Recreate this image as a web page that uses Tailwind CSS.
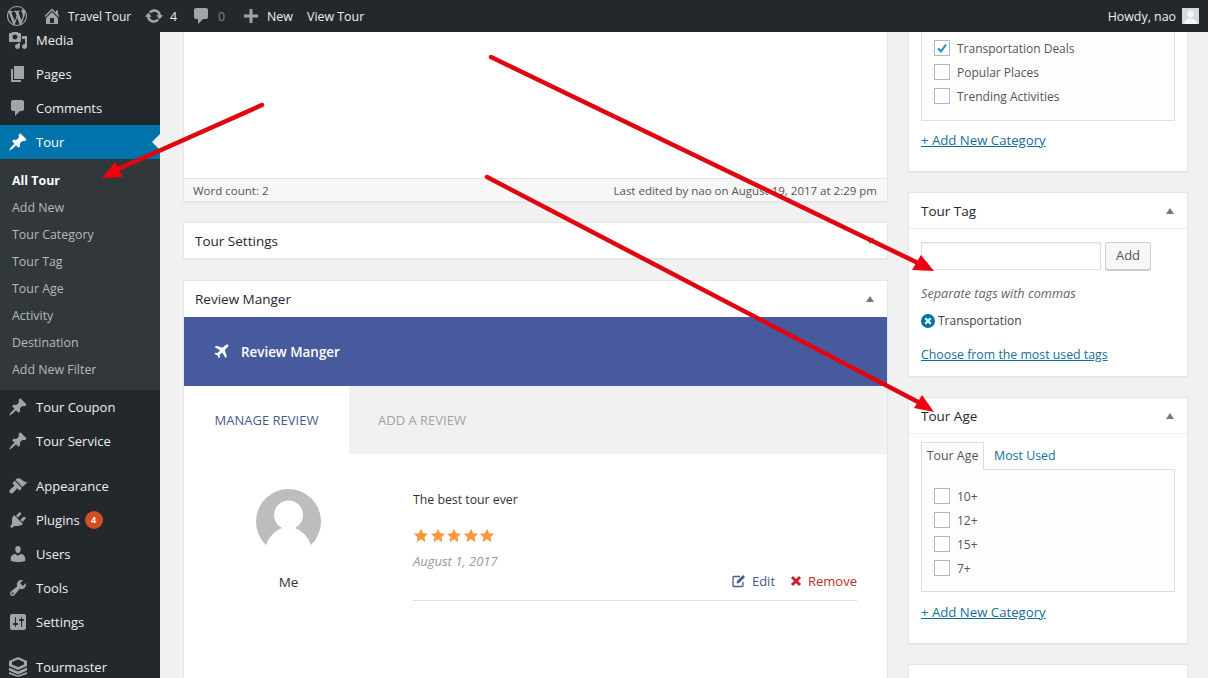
<!DOCTYPE html>
<html lang="en">
<head>
    <meta charset="UTF-8">
    <meta name="viewport" content="width=device-width, initial-scale=1.0">
    <title>Edit Tour</title>
    <script src="https://cdn.jsdelivr.net/npm/@tailwindcss/browser@4"></script>
</head>
<body class="bg-[#f1f1f1]">
<div class="relative w-[1208px] h-[678px] overflow-hidden bg-[#f1f1f1] font-['Open_Sans',sans-serif] text-[13px] text-[#444]">

    <!-- Admin bar -->
    <header class="relative z-10 h-8 bg-[#23282d] flex items-center justify-between text-[#eee] text-[12.4px]">
        <div class="flex items-center">
            <svg class="ml-[7px] w-5 h-5 fill-[#a0a5aa]" viewBox="0 0 20 20"><path d="M20 10c0-5.51-4.49-10-10-10C4.48 0 0 4.49 0 10c0 5.52 4.48 10 10 10 5.51 0 10-4.48 10-10zM7.78 15.37L4.37 6.22c.55-.02 1.17-.08 1.17-.08.5-.06.44-1.13-.06-1.11 0 0-1.45.11-2.37.11-.18 0-.37 0-.58-.01C4.12 2.69 6.87 1.11 10 1.11c2.33 0 4.45.87 6.05 2.34-.68-.11-1.65.39-1.65 1.58 0 .74.45 1.36.9 2.1.35.61.55 1.36.55 2.46 0 1.49-1.4 5-1.4 5l-3.03-8.37c.54-.02.82-.17.82-.17.5-.05.44-1.25-.06-1.22 0 0-1.44.12-2.38.12-.87 0-2.33-.12-2.33-.12-.5-.03-.56 1.2-.06 1.22l.92.08 1.26 3.41zM17.41 10c.24-.64.74-1.87.43-4.25.7 1.29 1.05 2.71 1.05 4.25 0 3.29-1.73 6.24-4.4 7.78.97-2.59 1.94-5.2 2.92-7.78zM6.1 18.09C3.12 16.65 1.11 13.53 1.11 10c0-1.3.23-2.48.72-3.59C3.25 10.3 4.67 14.2 6.1 18.09zm4.03-6.63l2.58 6.98c-.86.29-1.76.45-2.71.45-.79 0-1.57-.11-2.29-.33.81-2.38 1.62-4.74 2.42-7.1z"/></svg>
            <svg class="ml-[15px] w-5 h-5 fill-[#a0a5aa]" viewBox="0 0 20 20"><path d="M16 8.5l1.53 1.53-1.06 1.06L10 4.62l-6.47 6.47-1.06-1.06L10 2.5l4 4v-2h2v4zm-6-2.46l6 5.99V18H4v-5.97zM12 17v-5H8v5h4z"/></svg>
            <span class="ml-[6px] mt-[2px] w-[62px] text-[12px] whitespace-nowrap">Travel Tour</span>
            <svg class="ml-[14px] w-5 h-5 fill-[#a0a5aa]" viewBox="0 0 20 20"><path d="M10.2 3.28c3.53 0 6.43 2.61 6.92 6h2.08l-3.5 4-3.5-4h2.32c-.45-1.97-2.21-3.45-4.32-3.45-1.45 0-2.73.71-3.54 1.78L4.95 5.66C6.23 4.2 8.11 3.28 10.2 3.28zm-.4 13.44c-3.52 0-6.43-2.61-6.92-6H.8l3.5-4c1.17 1.33 2.33 2.67 3.5 4H5.48c.45 1.97 2.21 3.45 4.32 3.45 1.45 0 2.73-.71 3.54-1.78l1.71 1.95c-1.28 1.46-3.15 2.38-5.25 2.38z"/></svg>
            <span class="ml-[6px] mt-[2px] w-[7px]">4</span>
            <svg class="ml-[14px] w-5 h-5 fill-[#a0a5aa]" viewBox="0 0 20 20"><path d="M5 2h10c1.1 0 2 .9 2 2v7c0 1.1-.9 2-2 2h-3l-5 5v-5H5c-1.1 0-2-.9-2-2V4c0-1.1.9-2 2-2z"/></svg>
            <span class="ml-[7px] mt-[2px] w-[7px] text-[#7f8488]">0</span>
            <svg class="ml-[16px] w-5 h-5 fill-[#a0a5aa]" viewBox="0 0 20 20"><path d="M17 8.5v3h-5.5V17h-3v-5.5H3v-3h5.5V3h3v5.5H17z"/></svg>
            <span class="ml-[6px] mt-[2px] w-[26px]">New</span>
            <span class="ml-[14px] mt-[2px] whitespace-nowrap">View Tour</span>
        </div>
        <div class="flex items-center pr-[9px]">
            <span class="mt-[2px]">Howdy, nao</span>
            <svg class="ml-[6px] w-[17px] h-4 bg-[#d9d9d9]" viewBox="0 0 17 16"><circle cx="8.5" cy="6" r="3.4" fill="#f6f6f6"/><path d="M2.5 16c0-4 2.6-5.5 6-5.5s6 1.500 6 5.500z" fill="#f6f6f6"/></svg>
        </div>
    </header>

    <div class="flex h-[646px] items-start">
        <!-- Sidebar -->
        <aside class="w-40 h-[680px] -mt-[9px] shrink-0 bg-[#23282d] text-[13px] text-[#eee]">
            <a class="h-[34px] pl-2 flex items-center gap-2"><svg class="w-5 h-5 fill-[#a0a5aa]" viewBox="0 0 20 20"><path d="M13 11V4c0-.55-.45-1-1-1h-1.670L9 1H5L3.670 3H2c-.55 0-1 .45-1 1v7c0 .55.45 1 1 1h10c.55 0 1-.45 1-1zM7 4.500c1.380 0 2.500 1.120 2.500 2.500S8.380 9.500 7 9.500 4.500 8.380 4.500 7 5.620 4.500 7 4.500zM14 6h5v10.500c0 1.380-1.120 2.500-2.500 2.500S14 17.880 14 16.500s1.120-2.500 2.500-2.500c.17 0 .34.020.5.050V9h-3V6zm-4 8.050V13h2v3.500c0 1.380-1.120 2.500-2.500 2.500S7 17.880 7 16.500 8.120 14 9.500 14c.17 0 .34.020.5.050z"/></svg><span class="pt-[2px]">Media</span></a>
            <a class="h-[34px] pl-2 flex items-center gap-2"><svg class="w-5 h-5 fill-[#a0a5aa]" viewBox="0 0 20 20"><path d="M6 15V2h10v13H6zm-1 1h8v2H3V5h2v11z"/></svg><span class="pt-[2px]">Pages</span></a>
            <a class="h-[34px] pl-2 flex items-center gap-2"><svg class="w-5 h-5 fill-[#a0a5aa]" viewBox="0 0 20 20"><path d="M5 2h9c1.100 0 2 .9 2 2v7c0 1.100-.9 2-2 2h-2l-5 5v-5H5c-1.100 0-2-.9-2-2V4c0-1.100.9-2 2-2z"/></svg><span class="pt-[2px]">Comments</span></a>
            <a class="relative h-[34px] pl-2 flex items-center gap-2 bg-[#0073aa] text-white"><svg class="w-5 h-5 fill-white" viewBox="0 0 20 20"><path d="M10.440 3.020l1.820-1.820 6.360 6.350-1.830 1.820c-1.050-.68-2.480-.57-3.410.36l-.75.75c-.92.93-1.040 2.350-.35 3.410l-1.830 1.820-2.410-2.410-2.800 2.790c-.42.42-3.380 2.710-3.800 2.290s1.860-3.390 2.280-3.810l2.790-2.790L4.100 9.360l1.830-1.820c1.050.69 2.480.57 3.400-.36l.75-.75c.93-.92 1.050-2.350.36-3.410z"/></svg><span class="pt-[2px]">Tour</span><span class="absolute right-0 top-[9px] border-y-8 border-r-8 border-y-transparent border-r-[#f1f1f1]"></span></a>
            <ul class="bg-[#32373c] pt-2 pb-[7px] text-[12.4px] text-[#b4b9be]">
                <li class="h-[27px] pl-3 pt-[2px] flex items-center font-bold text-white">All Tour</li>
                <li class="h-[27px] pl-3 pt-[2px] flex items-center">Add New</li>
                <li class="h-[27px] pl-3 pt-[2px] flex items-center">Tour Category</li>
                <li class="h-[27px] pl-3 pt-[2px] flex items-center">Tour Tag</li>
                <li class="h-[27px] pl-3 pt-[2px] flex items-center">Tour Age</li>
                <li class="h-[27px] pl-3 pt-[2px] flex items-center">Activity</li>
                <li class="h-[27px] pl-3 pt-[2px] flex items-center">Destination</li>
                <li class="h-[27px] pl-3 pt-[2px] flex items-center">Add New Filter</li>
            </ul>
            <a class="h-[34px] pl-2 flex items-center gap-2"><svg class="w-5 h-5 fill-[#a0a5aa]" viewBox="0 0 20 20"><path d="M10.440 3.020l1.820-1.820 6.360 6.350-1.830 1.820c-1.050-.68-2.480-.57-3.410.36l-.75.75c-.92.93-1.040 2.350-.35 3.410l-1.830 1.820-2.410-2.410-2.800 2.790c-.42.42-3.380 2.710-3.800 2.290s1.860-3.390 2.280-3.810l2.790-2.790L4.100 9.360l1.830-1.820c1.050.69 2.480.57 3.400-.36l.75-.75c.93-.92 1.050-2.350.36-3.410z"/></svg><span class="pt-[2px]">Tour Coupon</span></a>
            <a class="h-[34px] pl-2 flex items-center gap-2"><svg class="w-5 h-5 fill-[#a0a5aa]" viewBox="0 0 20 20"><path d="M10.440 3.020l1.820-1.820 6.360 6.350-1.830 1.820c-1.050-.68-2.480-.57-3.410.36l-.75.75c-.92.93-1.040 2.350-.35 3.410l-1.830 1.820-2.410-2.410-2.800 2.790c-.42.42-3.380 2.710-3.800 2.290s1.860-3.390 2.280-3.810l2.790-2.790L4.100 9.360l1.830-1.820c1.050.69 2.480.57 3.400-.36l.75-.75c.93-.92 1.050-2.350.36-3.410z"/></svg><span class="pt-[2px]">Tour Service</span></a>
            <a class="mt-[11px] h-[34px] pl-2 flex items-center gap-2"><svg class="w-5 h-5 fill-[#a0a5aa]" viewBox="0 0 20 20"><path d="M14.480 11.060L7.410 3.990l1.500-1.500c.5-.56 2.300-.47 3.510.32 1.210.8 1.430 1.280 2.910 2.100 1.180.64 2.450 1.260 4.450.85zm-.71.71L6.700 4.700 4.930 6.470c-.39.39-.39 1.020 0 1.410l1.060 1.060c.39.39.39 1.030 0 1.420-.6.6-1.430 1.150-2.210 1.730-.35.26-.7.53-1.010.84-1.350 1.350-1.880 2.830-.77 3.940s2.590.58 3.940-.77c.31-.31.58-.66.84-1.010.58-.78 1.130-1.610 1.730-2.210.39-.39 1.030-.39 1.420 0l1.060 1.060c.39.39 1.020.39 1.410 0z"/></svg><span class="pt-[2px]">Appearance</span></a>
            <a class="h-[34px] pl-2 flex items-center gap-2"><svg class="w-5 h-5 fill-[#a0a5aa]" viewBox="0 0 20 20"><path d="M13.110 4.360L9.870 7.600 8 5.730l3.240-3.240c.35-.34 1.050-.2 1.560.32.52.51.66 1.210.31 1.550zm-8 1.770l.91-1.120 9.010 9.010-1.190.84c-.71.71-2.630 1.160-3.820 1.160H6.140L4.900 17.260c-.59.59-1.540.59-2.120 0-.59-.58-.59-1.530 0-2.120l1.240-1.240v-3.880c0-1.130.4-3.190 1.090-3.890zm7.260 3.970l3.240-3.240c.34-.35 1.040-.21 1.550.31.52.51.66 1.210.31 1.550l-3.240 3.250z"/></svg><span class="pt-[2px]">Plugins</span><span class="-ml-[3px] w-[18px] h-[18px] rounded-full bg-[#d54e21] text-white text-[9px] font-bold flex items-center justify-center">4</span></a>
            <a class="h-[34px] pl-2 flex items-center gap-2"><svg class="w-5 h-5 fill-[#a0a5aa]" viewBox="0 0 20 20"><path d="M10 9.250c-2.270 0-2.730-3.440-2.730-3.440C7 4.020 7.820 2 9.970 2c2.160 0 2.980 2.020 2.710 3.810 0 0-.41 3.440-2.680 3.440zm0 2.570L12.720 10c2.390 0 4.520 2.330 4.520 4.530v2.490s-3.650 1.130-7.240 1.130c-3.650 0-7.240-1.130-7.240-1.130v-2.490c0-2.250 1.940-4.480 4.470-4.480z"/></svg><span class="pt-[2px]">Users</span></a>
            <a class="h-[34px] pl-2 flex items-center gap-2"><svg class="w-5 h-5 fill-[#a0a5aa]" viewBox="0 0 20 20"><path d="M16.680 9.770c-1.340 1.340-3.300 1.670-4.950.99l-5.410 6.520c-.99.99-2.590.99-3.580 0s-.99-2.590 0-3.570l6.520-5.420c-.68-1.650-.35-3.610.99-4.950 1.280-1.280 3.120-1.620 4.720-1.060l-2.890 2.890 2.820 2.820 2.860-2.870c.53 1.580.18 3.390-1.080 4.650zM3.810 16.210c.4.39 1.040.39 1.430 0 .4-.4.4-1.040 0-1.430-.39-.4-1.030-.4-1.430 0-.39.39-.39 1.030 0 1.430z"/></svg><span class="pt-[2px]">Tools</span></a>
            <a class="h-[34px] pl-2 flex items-center gap-2"><svg class="w-5 h-5 fill-[#a0a5aa]" viewBox="0 0 20 20"><path d="M18 16V4c0-1.100-.9-2-2-2H4c-1.100 0-2 .9-2 2v12c0 1.100.9 2 2 2h12c1.100 0 2-.9 2-2zM8 11h1c.55 0 1 .45 1 1s-.45 1-1 1H8v1.500c0 .28-.22.5-.5.5s-.5-.22-.5-.5V13H6c-.55 0-1-.45-1-1s.45-1 1-1h1V5.500c0-.28.22-.5.5-.5s.5.22.5.5V11zm5-2h-1c-.55 0-1-.45-1-1s.45-1 1-1h1V5.500c0-.28.22-.5.5-.5s.5.22.5.5V7h1c.55 0 1 .45 1 1s-.45 1-1 1h-1v5.500c0 .28-.22.5-.5.5s-.5-.22-.5-.5V9z"/></svg><span class="pt-[2px]">Settings</span></a>
            <a class="mt-[11px] h-[34px] pl-2 flex items-center gap-2"><svg class="w-5 h-5 fill-[#a0a5aa]" viewBox="0 0 20 20"><path d="M10 0L1 4v5l9 4 9-4V4zM10 2.500L16 5v2.500l-6 2.600-6-2.600V5zM1 10.500v3l9 4 9-4v-3l-9 4zM1 15v2l9 3 9-3v-2l-9 3.500z"/></svg><span class="pt-[2px]">Tourmaster</span></a>
        </aside>

        <!-- Main column -->
        <main class="ml-[23px] w-[705px] shrink-0">
            <div class="h-[170px] bg-white border-x border-b border-[#e5e5e5] shadow-[0_1px_1px_rgba(0,0,0,0.04)] flex flex-col justify-end">
                <div class="h-[23px] bg-[#f7f7f7] border-t border-[#e5e5e5] pl-[9px] pr-[10px] pt-px flex items-center justify-between text-[11.500px] text-[#555]">
                    <span>Word count: 2</span>
                    <span>Last edited by nao on August 19, 2017 at 2:29 pm</span>
                </div>
            </div>

            <div class="mt-5 h-[37px] bg-white border border-[#e5e5e5] shadow-[0_1px_1px_rgba(0,0,0,0.04)] pl-[11px] pr-3 flex items-center justify-between">
                <h2 class="pt-[2px] text-[13.500px] font-medium text-[#23282d]">Tour Settings</h2>
                <svg class="w-2 h-2 mr-[1px] fill-[#72777c]" viewBox="0 0 8 8"><path d="M0 1h8L4 7z"/></svg>
            </div>

            <section class="mt-[21px] h-[500px] bg-white border-x border-t border-[#e5e5e5]">
                <div class="h-9 pl-[11px] pr-3 flex items-center justify-between">
                    <h2 class="text-[13.500px] font-medium text-[#23282d]">Review Manger</h2>
                    <svg class="w-2 h-2 mr-[1px] fill-[#72777c]" viewBox="0 0 8 8"><path d="M0 7h8L4 1z"/></svg>
                </div>
                <div class="h-[69px] bg-[#485a9e] pl-[29px] flex items-center gap-3 text-white text-[13.400px] font-semibold">
                    <svg class="w-[16px] h-[16px] fill-white" viewBox="0 0 16 16"><path d="M15 1c-.8-.8-2.100-.4-2.900.4L9.700 3.800 3 1.800 1.700 3.100l5.400 3.300-2.600 2.600-2.100-.3L1.300 9.800l3 1.500 1.500 3 1.100-1.100-.3-2.100 2.600-2.600 3.300 5.400 1.300-1.300-2-6.700 2.400-2.400C15.400 3.100 15.800 1.800 15 1z"/></svg>
                    <span class="pt-[2px]">Review Manger</span>
                </div>
                <div class="h-[68px] bg-[#f1f1f1] flex text-[13px] font-medium">
                    <div class="w-[165px] pt-[2px] bg-white text-[#485a8a] flex items-center justify-center">MANAGE REVIEW</div>
                    <div class="pl-[29px] pt-[2px] text-[#a3a3a3] flex items-center">ADD A REVIEW</div>
                </div>
                <div class="flex pt-[35px]">
                    <div class="w-[209px] flex flex-col items-center">
                        <svg class="w-[65px] h-[65px]" viewBox="0 0 65 65">
                            <circle cx="32.500" cy="32.500" r="32.500" fill="#bdbdbd"/>
                            <circle cx="32.500" cy="26" r="14.500" fill="#fff"/>
                            <path d="M0 65V56H10C14 45 23 38 32.500 38S51 45 55 56H65V65z" fill="#fff"/>
                        </svg>
                        <span class="mt-[19px] text-[#333] font-medium text-[13.500px] leading-[18px]">Me</span>
                    </div>
                    <div class="ml-5 w-[444px] h-[112px] border-b border-[#ddd] relative">
                        <p class="mt-px text-[12.300px] leading-[20px] text-[#333]">The best tour ever</p>
                        <div class="mt-[18px] flex gap-[0.5px]">
                            <svg class="w-4 h-[15px] fill-[#f7993b]" viewBox="0 0 24 24"><path d="M12 1l3.400 7.300 7.900 1-5.800 5.500 1.500 7.900L12 18l-7 4.700 1.500-7.900L.7 9.300l7.900-1z"/></svg>
                            <svg class="w-4 h-[15px] fill-[#f7993b]" viewBox="0 0 24 24"><path d="M12 1l3.400 7.300 7.900 1-5.800 5.500 1.500 7.900L12 18l-7 4.700 1.500-7.900L.7 9.300l7.900-1z"/></svg>
                            <svg class="w-4 h-[15px] fill-[#f7993b]" viewBox="0 0 24 24"><path d="M12 1l3.400 7.300 7.900 1-5.800 5.500 1.500 7.900L12 18l-7 4.700 1.500-7.900L.7 9.300l7.900-1z"/></svg>
                            <svg class="w-4 h-[15px] fill-[#f7993b]" viewBox="0 0 24 24"><path d="M12 1l3.400 7.300 7.900 1-5.800 5.500 1.500 7.900L12 18l-7 4.700 1.500-7.900L.7 9.300l7.900-1z"/></svg>
                            <svg class="w-4 h-[15px] fill-[#f7993b]" viewBox="0 0 24 24"><path d="M12 1l3.400 7.300 7.900 1-5.800 5.500 1.500 7.900L12 18l-7 4.700 1.500-7.900L.7 9.300l7.900-1z"/></svg>
                        </div>
                        <p class="mt-[9px] text-[13px] leading-[18px] italic text-[#9a9a9a]">August 1, 2017</p>
                        <div class="mt-[2px] flex justify-end items-center text-[13px] leading-[18px]">
                            <svg class="w-[14px] h-[14px] mr-[6px] stroke-[#485a8a] fill-none" viewBox="0 0 14 14"><path d="M11 8v3.500a1 1 0 0 1-1 1H2a1 1 0 0 1-1-1V3.500a1 1 0 0 1 1-1h6" stroke-width="1.300"/><path d="M5 7l6-6 2 2-6 6-2.500.5z" fill="#485a8a" stroke="none"/></svg>
                            <span class="text-[#485a8a]">Edit</span>
                            <svg class="w-[12px] h-[12px] ml-[15px] mr-[6px] stroke-[#c8232c]" viewBox="0 0 12 12"><path d="M2 2l8 8M10 2l-8 8" stroke-width="3"/></svg>
                            <span class="text-[#b32d2e]">Remove</span>
                        </div>
                    </div>
                </div>
            </section>
        </main>

        <!-- Side column -->
        <div class="ml-5 w-[280px] shrink-0">
            <div class="h-[140px] bg-white border-x border-b border-[#e5e5e5] shadow-[0_1px_1px_rgba(0,0,0,0.04)] px-3">
                <div class="w-[254px] h-[89px] bg-[#fdfdfd] border-x border-b border-[#ddd] pl-3 pt-2 flex flex-col gap-2">
                    <label class="h-4 flex items-center gap-[7px] text-[12px] text-[#555]"><span class="w-4 h-4 bg-white border border-[#b4b9be] flex items-center justify-center"><svg class="w-3 h-3 stroke-[#1e8cbe] fill-none" viewBox="0 0 12 12"><path d="M2 6.500l3 3 5-7" stroke-width="2"/></svg></span><span class="pt-[2px]">Transportation Deals</span></label>
                    <label class="h-4 flex items-center gap-[7px] text-[12px] text-[#555]"><span class="w-4 h-4 bg-white border border-[#b4b9be]"></span><span class="pt-[2px]">Popular Places</span></label>
                    <label class="h-4 flex items-center gap-[7px] text-[12px] text-[#555]"><span class="w-4 h-4 bg-white border border-[#b4b9be]"></span><span class="pt-[2px]">Trending Activities</span></label>
                </div>
                <a class="block mt-[10px] text-[13.200px] leading-[18px] text-[#0f6f9b] underline">+ Add New Category</a>
            </div>

            <section class="mt-5 h-[185px] bg-white border border-[#e5e5e5] shadow-[0_1px_1px_rgba(0,0,0,0.04)]">
                <div class="h-9 border-b border-[#eee] px-3 flex items-center justify-between">
                    <h2 class="pt-[2px] text-[13.500px] font-medium text-[#23282d]">Tour Tag</h2>
                    <svg class="w-2 h-2 mr-[1px] fill-[#72777c]" viewBox="0 0 8 8"><path d="M0 7h8L4 1z"/></svg>
                </div>
                <div class="px-3 pt-[13px]">
                    <div class="flex gap-1">
                        <div class="w-[180px] h-7 bg-white border border-[#ddd] shadow-[inset_0_1px_2px_rgba(0,0,0,0.07)]"></div>
                        <button class="w-[46px] h-7 bg-[#f7f7f7] border border-[#ccc] rounded-[3px] shadow-[0_1px_0_#ccc] text-[13px] text-[#555]">Add</button>
                    </div>
                    <p class="mt-[14px] text-[12.700px] leading-[18px] italic text-[#666]">Separate tags with commas</p>
                    <div class="mt-[10px] flex items-center gap-[3px] text-[12px] leading-[18px] text-[#444]">
                        <svg class="w-[14px] h-[14px]" viewBox="0 0 13 13"><circle cx="6.500" cy="6.500" r="6.500" fill="#0073aa"/><path d="M4 4l5 5M9 4l-5 5" stroke="#fff" stroke-width="2"/></svg>
                        Transportation
                    </div>
                    <a class="block mt-4 text-[12.330px] leading-[18px] text-[#0f6f9b] underline">Choose from the most used tags</a>
                </div>
            </section>

            <section class="mt-5 h-[247px] bg-white border border-[#e5e5e5] shadow-[0_1px_1px_rgba(0,0,0,0.04)]">
                <div class="h-9 border-b border-[#eee] px-3 flex items-center justify-between">
                    <h2 class="pt-[2px] text-[13.500px] font-medium text-[#23282d]">Tour Age</h2>
                    <svg class="w-2 h-2 mr-[1px] fill-[#72777c]" viewBox="0 0 8 8"><path d="M0 7h8L4 1z"/></svg>
                </div>
                <div class="px-3 pt-2">
                    <div class="flex h-7 text-[12.400px] relative z-[1]">
                        <span class="w-[63px] h-7 bg-[#fdfdfd] border-x border-t border-[#ddd] flex items-center justify-center text-[#555]">Tour Age</span>
                        <span class="ml-[10px] flex items-center text-[#0f6f9b]">Most Used</span>
                    </div>
                    <div class="w-[254px] h-[123px] -mt-[1px] bg-[#fdfdfd] border border-[#ddd] pl-3 pt-[18px] flex flex-col gap-2">
                        <label class="h-4 flex items-center gap-[7px] text-[12px] text-[#555]"><span class="w-4 h-4 bg-white border border-[#b4b9be]"></span><span class="pt-[2px]">10+</span></label>
                        <label class="h-4 flex items-center gap-[7px] text-[12px] text-[#555]"><span class="w-4 h-4 bg-white border border-[#b4b9be]"></span><span class="pt-[2px]">12+</span></label>
                        <label class="h-4 flex items-center gap-[7px] text-[12px] text-[#555]"><span class="w-4 h-4 bg-white border border-[#b4b9be]"></span><span class="pt-[2px]">15+</span></label>
                        <label class="h-4 flex items-center gap-[7px] text-[12px] text-[#555]"><span class="w-4 h-4 bg-white border border-[#b4b9be]"></span><span class="pt-[2px]">7+</span></label>
                    </div>
                    <a class="block mt-[11px] text-[13.200px] leading-[18px] text-[#0f6f9b] underline">+ Add New Category</a>
                </div>
            </section>

            <div class="mt-5 h-[40px] bg-white border border-[#e5e5e5]"></div>
        </div>
    </div>

    <!-- Red annotation arrows drawn over the screenshot -->
    <svg class="absolute left-0 top-0 z-20 pointer-events-none" width="1208" height="678" viewBox="0 0 1208 678">
        <g stroke="#e0060f" stroke-width="4.500" stroke-linecap="round" fill="none">
            <path d="M262 105L116 170"/>
            <path d="M491 57L918 263"/>
            <path d="M487 177L920 403"/>
        </g>
        <g fill="#ee0010">
            <path d="M102 178L115 162L123 177z"/>
            <path d="M934 271L921 255L912 270z"/>
            <path d="M934 412L922 395L914 408z"/>
        </g>
    </svg>
</div>
</body>
</html>
